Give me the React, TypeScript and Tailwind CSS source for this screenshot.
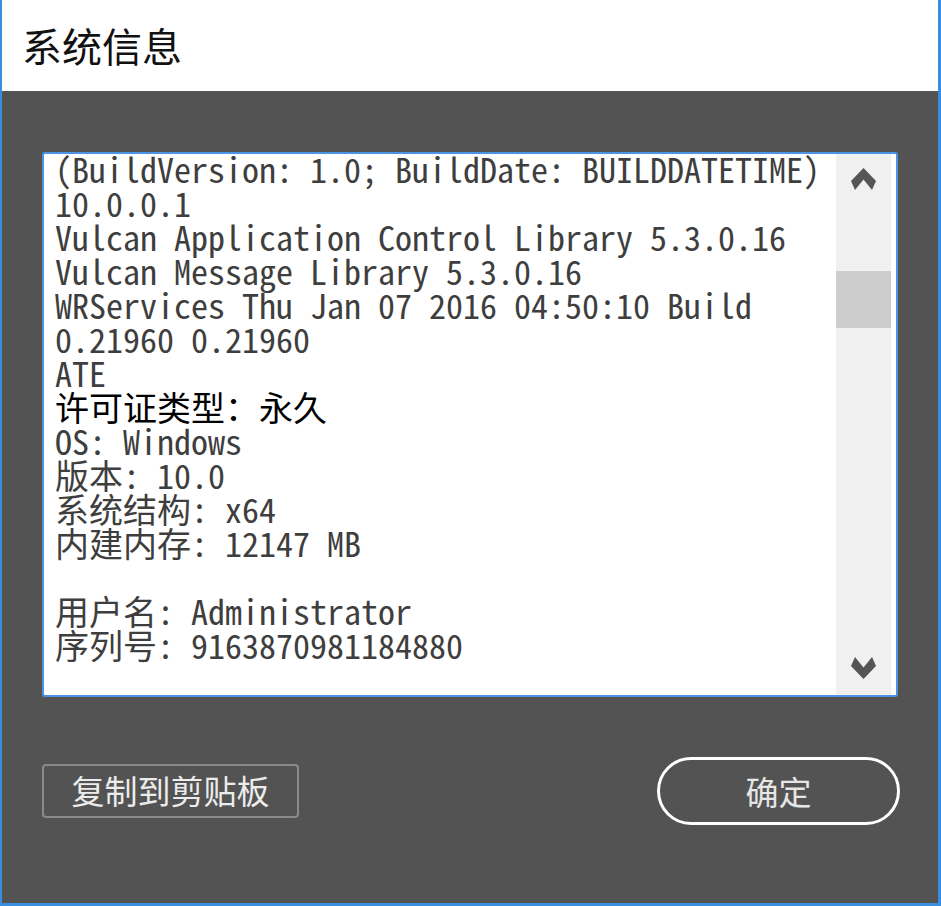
import React from "react";

const lines: { t: string; dark?: boolean }[] = [
  { t: "(BuildVersion: 1.0; BuildDate: BUILDDATETIME)" },
  { t: "10.0.0.1" },
  { t: "Vulcan Application Control Library 5.3.0.16" },
  { t: "Vulcan Message Library 5.3.0.16" },
  { t: "WRServices Thu Jan 07 2016 04:50:10 Build" },
  { t: "0.21960 0.21960" },
  { t: "ATE" },
  { t: "许可证类型：永久", dark: true },
  { t: "OS: Windows" },
  { t: "版本: 10.0" },
  { t: "系统结构: x64" },
  { t: "内建内存: 12147 MB" },
  { t: "" },
  { t: "用户名: Administrator" },
  { t: "序列号: 9163870981184880" },
];

export default function App() {
  return (
    <div className="w-[941px] h-[906px] flex flex-col border-l-2 border-r-[3px] border-b-[3px] border-[#3b8de0] bg-[#535353] overflow-hidden">
      <div className="h-[91px] shrink-0 bg-white flex items-center pl-[20px]">
        <span className="text-[40px] leading-none text-[#111] font-['Noto_Sans_CJK_SC',sans-serif] pb-[2px]">
          系统信息
        </span>
      </div>
      <div className="flex-1 flex flex-col pl-[40px] pr-[40px]">
        <div className="mt-[61px] h-[545px] flex bg-white border-2 border-[#4b93e3] rounded-[3px] overflow-hidden">
          <div className="flex-1 pl-[11px] -mt-[2px] overflow-hidden font-['Noto_Sans_Mono_CJK_SC','Liberation_Mono','Noto_Sans_CJK_SC',monospace] text-[34px]">
            {lines.map((l, i) => (
              <div
                key={i}
                className={
                  "h-[34px] leading-[34px] whitespace-pre " +
                  (l.dark ? "text-black" : "text-[#3e3e3e]")
                }
              >
                {l.t}
              </div>
            ))}
          </div>
          <div className="w-[55px] shrink-0 bg-[#f0f0f0] flex flex-col">
            <div className="h-[50px] flex items-center justify-center">
              <svg width="25" height="22" viewBox="0 0 25 22">
                <polygon points="12.5,0 25,13 21,22 12.5,11.5 4,22 0,13" fill="#555555" />
              </svg>
            </div>
            <div className="h-[67px]" />
            <div className="h-[57px] bg-[#cdcdcd]" />
            <div className="flex-1" />
            <div className="h-[54px] flex items-center justify-center">
              <svg width="25" height="22" viewBox="0 0 25 22">
                <polygon points="12.5,22 25,9 21,0 12.5,10.5 4,0 0,9" fill="#555555" />
              </svg>
            </div>
          </div>
          <div className="w-[5px] shrink-0 bg-white" />
        </div>
        <div className="mt-[60px] flex items-center justify-between">
          <div className="w-[257px] h-[54px] border-2 border-[#8a8a8a] rounded-[4px] flex items-center justify-center text-[33px] text-[#ececec] font-['Noto_Sans_CJK_SC',sans-serif] leading-none pb-[2px]">
            复制到剪贴板
          </div>
          <div className="w-[243px] h-[68px] mr-[-2px] border-[3px] border-white rounded-full flex items-center justify-center text-[33px] text-[#e6e6e6] font-['Noto_Sans_CJK_SC',sans-serif] leading-none">
            确定
          </div>
        </div>
      </div>
    </div>
  );
}
